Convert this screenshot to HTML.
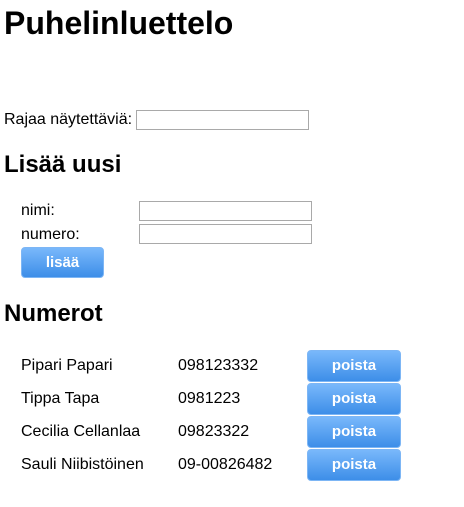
<!DOCTYPE html>
<html><head><meta charset="utf-8"><style>
body{margin:0;width:464px;height:507px;background:#fff;font-family:"Liberation Sans",Arial,sans-serif;color:#000;position:relative;overflow:hidden}
.a{position:absolute;white-space:nowrap}
h1,h2{margin:0;font-weight:bold}
.inp{position:absolute;border:1px solid #a9a9a9;background:#fff;box-sizing:border-box;height:20px}
.btn{position:absolute;box-sizing:border-box;border:1px solid #7db6f5;border-radius:4px;background:linear-gradient(#79b8fb,#3d8ee8);color:#fff;font-weight:bold;font-size:15px;text-align:center;line-height:29px}
.t{font-size:16px}
</style></head><body>
<h1 class="a" style="left:4px;top:5px;font-size:32px">Puhelinluettelo</h1>
<div class="a t" style="left:4px;top:111px">Rajaa näytettäviä:</div>
<div class="inp" style="left:136px;top:110px;width:173px"></div>
<h2 class="a" style="left:4px;top:151px;font-size:24px">Lisää uusi</h2>
<div class="a t" style="left:21px;top:202px">nimi:</div>
<div class="inp" style="left:139px;top:201px;width:173px"></div>
<div class="a t" style="left:21px;top:226px">numero:</div>
<div class="inp" style="left:139px;top:224px;width:173px"></div>
<div class="btn" style="left:21px;top:247px;width:83px;height:31px">lisää</div>
<h2 class="a" style="left:4px;top:300px;font-size:24px">Numerot</h2>
<div class="a t" style="left:21px;top:357px">Pipari Papari</div><div class="a t" style="left:178px;top:357px">098123332</div>
<div class="btn" style="left:307px;top:350px;width:94px;height:32px">poista</div>
<div class="a t" style="left:21px;top:390px">Tippa Tapa</div><div class="a t" style="left:178px;top:390px">0981223</div>
<div class="btn" style="left:307px;top:383px;width:94px;height:32px">poista</div>
<div class="a t" style="left:21px;top:423px">Cecilia Cellanlaa</div><div class="a t" style="left:178px;top:423px">09823322</div>
<div class="btn" style="left:307px;top:416px;width:94px;height:32px">poista</div>
<div class="a t" style="left:21px;top:456px">Sauli Niibistöinen</div><div class="a t" style="left:178px;top:456px">09-00826482</div>
<div class="btn" style="left:307px;top:449px;width:94px;height:32px">poista</div>
</body></html>
